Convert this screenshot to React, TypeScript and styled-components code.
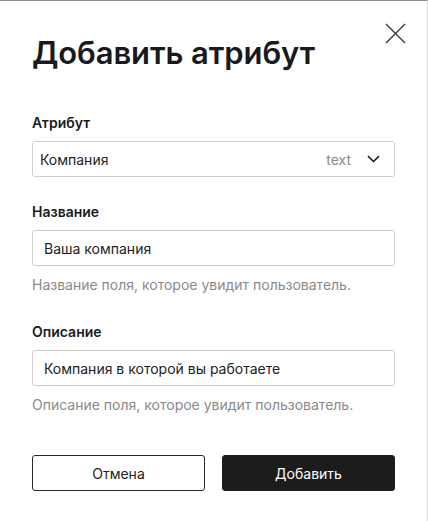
import styled, { createGlobalStyle } from "styled-components";

const GlobalStyle = createGlobalStyle`
  html, body {
    margin: 0;
    padding: 0;
    background: #fff;
  }

  body {
    font-family: Inter, "Noto Sans", "Liberation Sans", sans-serif;
    color: #1c1c1c;
  }

  * {
    box-sizing: border-box;
  }
`;

const Dialog = styled.div`
  position: relative;
  width: 428px;
  height: 521px;
  padding: 34px 32px 0;
  border-top: 1px solid #8c8c8c;
  border-right: 1px solid #dcdcdc;
  background: #fff;
`;

const CloseButton = styled.button`
  position: absolute;
  top: 22px;
  right: 21px;
  width: 21px;
  height: 21px;
  padding: 0;
  border: 0;
  background: none;
  cursor: pointer;

  svg {
    display: block;
  }
`;

const Title = styled.h2`
  margin: 0 0 42px;
  font-size: 31px;
  line-height: 36px;
  font-weight: 600;
  letter-spacing: -0.1px;
  color: #1a1a1a;
`;

const Field = styled.div<{ $gap?: number }>`
  display: flex;
  flex-direction: column;
  margin-bottom: ${props => props.$gap ?? 25}px;
`;

const Label = styled.label`
  margin-bottom: 8px;
  font-size: 14px;
  line-height: 20px;
  font-weight: 600;
  color: #1c1c1c;
`;

const Box = styled.div<{ $select?: boolean }>`
  display: flex;
  align-items: center;
  height: 36px;
  padding: 0 ${props => (props.$select ? "14px 0 7px" : "11px")};
  border: 1px solid #cfcfcf;
  border-radius: 3px;
  font-size: 14px;
  color: #222;
`;

const BoxValue = styled.span`
  flex: 1;
`;

const TypeTag = styled.span`
  margin-right: 16px;
  color: #8a8a8a;
`;

const Hint = styled.div`
  margin-top: 9px;
  font-size: 14px;
  line-height: 20px;
  color: #8a8a8a;
`;

const Actions = styled.div`
  display: grid;
  grid-template-columns: 1fr 1fr;
  gap: 17px;
  margin-top: 40px;
`;

const Button = styled.button<{ $primary?: boolean }>`
  height: 36px;
  border: 1px solid ${props => (props.$primary ? "#1c1c1c" : "#2a2a2a")};
  border-radius: 3px;
  background: ${props => (props.$primary ? "#1c1c1c" : "#fff")};
  color: ${props => (props.$primary ? "#fff" : "#222")};
  font-family: inherit;
  font-size: 14px;
  cursor: pointer;
`;

export default function App() {
  return (
    <>
      <GlobalStyle />
      <Dialog>
        <CloseButton aria-label="Закрыть">
          <svg width="21" height="21" viewBox="0 0 21 21">
            <path d="M1 1L20 20M20 1L1 20" stroke="#3a3a3a" strokeWidth="1.4" fill="none" />
          </svg>
        </CloseButton>
        <Title>Добавить атрибут</Title>

        <Field>
          <Label>Атрибут</Label>
          <Box $select>
            <BoxValue>Компания</BoxValue>
            <TypeTag>text</TypeTag>
            <svg width="13" height="8" viewBox="0 0 13 8">
              <path d="M1 1.2L6.5 6.5L12 1.2" stroke="#1c1c1c" strokeWidth="1.6" fill="none" />
            </svg>
          </Box>
        </Field>

        <Field $gap={27}>
          <Label>Название</Label>
          <Box>
            <BoxValue>Ваша компания</BoxValue>
          </Box>
          <Hint>Название поля, которое увидит пользователь.</Hint>
        </Field>

        <Field $gap={0}>
          <Label>Описание</Label>
          <Box>
            <BoxValue>Компания в которой вы работаете</BoxValue>
          </Box>
          <Hint>Описание поля, которое увидит пользователь.</Hint>
        </Field>

        <Actions>
          <Button>Отмена</Button>
          <Button $primary>Добавить</Button>
        </Actions>
      </Dialog>
    </>
  );
}
